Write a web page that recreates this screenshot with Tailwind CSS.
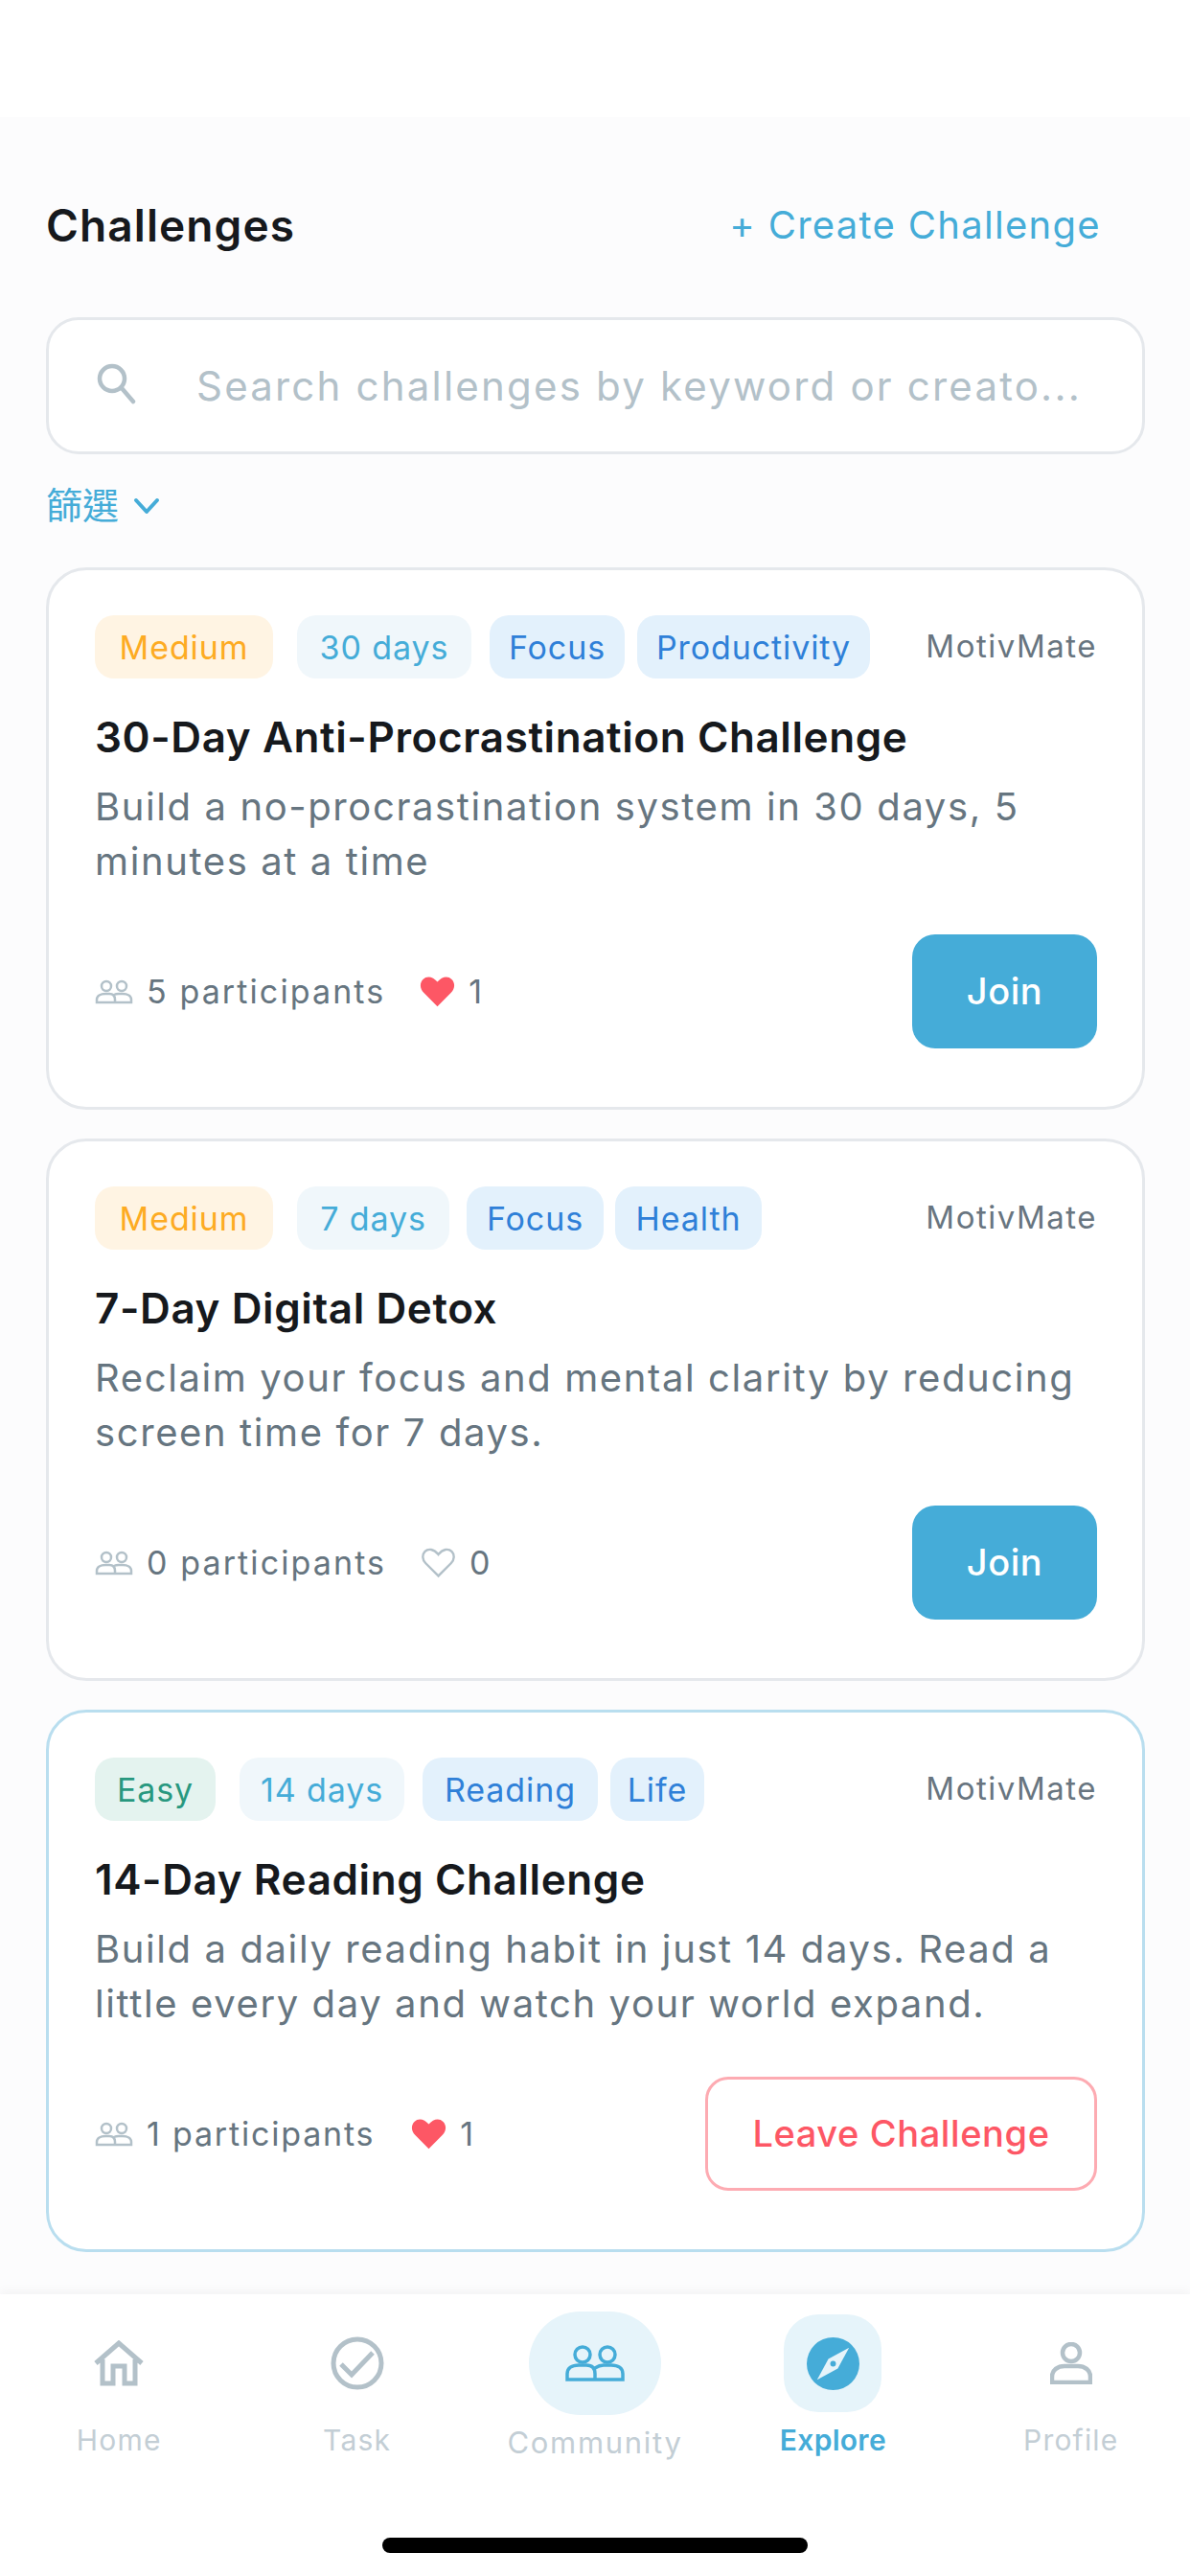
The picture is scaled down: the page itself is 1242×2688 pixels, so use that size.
<!DOCTYPE html>
<html lang="en">
<head>
    <meta charset="UTF-8">
    <meta name="viewport" content="width=device-width, initial-scale=1.0">
    <title>Challenges</title>
    <script src="https://cdn.jsdelivr.net/npm/@tailwindcss/browser@4"></script>
</head>
<body class="bg-white font-['Inter','Noto_Sans_CJK_TC',sans-serif]">
<div class="w-[1242px] h-[2688px] flex flex-col overflow-hidden">
    <!-- status bar area -->
    <div class="h-[122px] bg-white"></div>

    <main class="h-[2272px] bg-[#fcfcfd] pl-[48px] pr-[47px]">
        <div class="flex items-center justify-between h-[62px] mt-[82px] pr-[46px]">
            <h1 class="text-[46px] font-semibold text-[#16191d] tracking-[1.1px]">Challenges</h1>
            <a class="text-[40px] text-[#45acd8] tracking-[1.3px]">+ Create Challenge</a>
        </div>

        <div class="h-[143px] mt-[65px] bg-white border-[3px] border-[#e5e8ec] rounded-[34px] flex items-center pl-[48px] pr-[20px]">
            <svg class="w-[44px] h-[44px] mr-[62px] shrink-0 -mt-[6px]" viewBox="0 0 44 44" fill="none" stroke="#b3c1c9" stroke-width="4.5" stroke-linecap="round"><circle cx="18" cy="17" r="13"/><path d="M28 27 40 41"/></svg>
            <span class="text-[42px] text-[#b3c1c9] tracking-[2.2px] whitespace-nowrap">Search challenges by keyword or creato...</span>
        </div>

        <div class="flex items-center h-[40px] mt-[33px] text-[#45acd8]">
            <span class="text-[38px] leading-[40px]">篩選</span>
            <svg class="w-[28px] h-[20px] ml-[15px] mt-[2px]" viewBox="0 0 28 20" fill="none" stroke="#45acd8" stroke-width="4" stroke-linecap="round" stroke-linejoin="round"><path d="M3 4 14 16 25 4"/></svg>
        </div>

        <div class="flex flex-col gap-[30px] mt-[45px]">
            <!-- card 1 -->
            <article class="h-[566px] bg-white border-[3px] border-[#e5e8ec] rounded-[42px] pt-[47px] pl-[48px] pr-[47px]">
                <div class="flex items-center h-[66px]">
                    <span class="w-[186px] h-[66px] flex items-center justify-center rounded-[20px] bg-[#fff4e3] text-[#fdab23] text-[34px] tracking-[0.9px]">Medium</span>
                    <span class="w-[182px] h-[66px] ml-[25px] flex items-center justify-center rounded-[20px] bg-[#f0f7fb] text-[#45acd8] text-[34px] tracking-[0.9px]">30 days</span>
                    <span class="w-[141px] h-[66px] ml-[19px] flex items-center justify-center rounded-[20px] bg-[#e3f1fc] text-[#2f80d8] text-[34px] tracking-[0.9px]">Focus</span>
                    <span class="w-[243px] h-[66px] ml-[13px] flex items-center justify-center rounded-[20px] bg-[#e3f1fc] text-[#2f80d8] text-[34px] tracking-[0.9px]">Productivity</span>
                    <span class="ml-auto text-[33px] text-[#687580] tracking-[1.5px]">MotivMate</span>
                </div>
                <h2 class="mt-[31px] h-[60px] leading-[60px] text-[44px] font-semibold text-[#16191d] tracking-[0.6px]">30-Day Anti-Procrastination Challenge</h2>
                <p class="mt-[14px] text-[40px] leading-[57px] text-[#667580] tracking-[1.6px]">Build a no-procrastination system in 30 days, 5<br>minutes at a time</p>
                <div class="flex items-center justify-between mt-[48px] h-[119px]">
                    <div class="flex items-center text-[34px] text-[#667580] tracking-[2.1px]">
                        <svg class="w-[40px] h-[26px] mr-[14px]" viewBox="0 0 40 26" fill="none" stroke="#b3c1c9" stroke-width="2.5"><circle cx="12" cy="7" r="5"/><circle cx="28" cy="7" r="5"/><path d="M2 24v-3c0-4 4-6 9-6h4c4 0 6 2 6 6v3zM21 24h17v-3c0-4-4-6-9-6h-4c-2 0-3 0-5 1"/></svg>
                        <span>5 participants</span>
                        <svg class="w-[37px] h-[33px] ml-[36px] mr-[14px]" viewBox="0 0 24 22" fill="#fd5765"><path d="M12 21.500 2.600 12C-.4 9-.4 5 2 2.600 4.600 0 8.800.4 12 4.400 15.200.4 19.400 0 22 2.600 24.400 5 24.400 9 21.400 12z"/></svg>
                        <span>1</span>
                    </div>
                    <button class="w-[193px] h-[119px] rounded-[24px] bg-[#45acd8] text-white text-[38px] font-medium tracking-[0.6px]">Join</button>
                </div>
            </article>

            <!-- card 2 -->
            <article class="h-[566px] bg-white border-[3px] border-[#e5e8ec] rounded-[42px] pt-[47px] pl-[48px] pr-[47px]">
                <div class="flex items-center h-[66px]">
                    <span class="w-[186px] h-[66px] flex items-center justify-center rounded-[20px] bg-[#fff4e3] text-[#fdab23] text-[34px] tracking-[0.9px]">Medium</span>
                    <span class="w-[159px] h-[66px] ml-[25px] flex items-center justify-center rounded-[20px] bg-[#f0f7fb] text-[#45acd8] text-[34px] tracking-[0.9px]">7 days</span>
                    <span class="w-[143px] h-[66px] ml-[18px] flex items-center justify-center rounded-[20px] bg-[#e3f1fc] text-[#2f80d8] text-[34px] tracking-[0.9px]">Focus</span>
                    <span class="w-[153px] h-[66px] ml-[12px] flex items-center justify-center rounded-[20px] bg-[#e3f1fc] text-[#2f80d8] text-[34px] tracking-[0.9px]">Health</span>
                    <span class="ml-auto text-[33px] text-[#687580] tracking-[1.5px]">MotivMate</span>
                </div>
                <h2 class="mt-[31px] h-[60px] leading-[60px] text-[44px] font-semibold text-[#16191d] tracking-[0.6px]">7-Day Digital Detox</h2>
                <p class="mt-[14px] text-[40px] leading-[57px] text-[#667580] tracking-[1.6px]">Reclaim your focus and mental clarity by reducing<br>screen time for 7 days.</p>
                <div class="flex items-center justify-between mt-[48px] h-[119px]">
                    <div class="flex items-center text-[34px] text-[#667580] tracking-[2.1px]">
                        <svg class="w-[40px] h-[26px] mr-[14px]" viewBox="0 0 40 26" fill="none" stroke="#b3c1c9" stroke-width="2.5"><circle cx="12" cy="7" r="5"/><circle cx="28" cy="7" r="5"/><path d="M2 24v-3c0-4 4-6 9-6h4c4 0 6 2 6 6v3zM21 24h17v-3c0-4-4-6-9-6h-4c-2 0-3 0-5 1"/></svg>
                        <span>0 participants</span>
                        <svg class="w-[37px] h-[33px] ml-[36px] mr-[14px]" viewBox="0 0 24 22" fill="none" stroke="#b3c1c9" stroke-width="1.6"><path d="M12 20.300 3.200 11.500C.6 8.900.6 5.400 2.700 3.300 5 1 8.800 1.400 12 5.400 15.200 1.400 19 1 21.300 3.300 23.400 5.400 23.400 8.900 20.800 11.500z"/></svg>
                        <span>0</span>
                    </div>
                    <button class="w-[193px] h-[119px] rounded-[24px] bg-[#45acd8] text-white text-[38px] font-medium tracking-[0.6px]">Join</button>
                </div>
            </article>

            <!-- card 3 -->
            <article class="h-[566px] bg-white border-[3px] border-[#b9deef] rounded-[42px] pt-[47px] pl-[48px] pr-[47px]">
                <div class="flex items-center h-[66px]">
                    <span class="w-[126px] h-[66px] flex items-center justify-center rounded-[20px] bg-[#e4f3ef] text-[#28987f] text-[34px] tracking-[0.9px]">Easy</span>
                    <span class="w-[172px] h-[66px] ml-[25px] flex items-center justify-center rounded-[20px] bg-[#f0f7fb] text-[#45acd8] text-[34px] tracking-[0.9px]">14 days</span>
                    <span class="w-[183px] h-[66px] ml-[19px] flex items-center justify-center rounded-[20px] bg-[#e3f1fc] text-[#2f80d8] text-[34px] tracking-[0.9px]">Reading</span>
                    <span class="w-[98px] h-[66px] ml-[13px] flex items-center justify-center rounded-[20px] bg-[#e3f1fc] text-[#2f80d8] text-[34px] tracking-[0.9px]">Life</span>
                    <span class="ml-auto text-[33px] text-[#687580] tracking-[1.5px]">MotivMate</span>
                </div>
                <h2 class="mt-[31px] h-[60px] leading-[60px] text-[44px] font-semibold text-[#16191d] tracking-[0.6px]">14-Day Reading Challenge</h2>
                <p class="mt-[14px] text-[40px] leading-[57px] text-[#667580] tracking-[1.6px]">Build a daily reading habit in just 14 days. Read a<br>little every day and watch your world expand.</p>
                <div class="flex items-center justify-between mt-[48px] h-[119px]">
                    <div class="flex items-center text-[34px] text-[#667580] tracking-[1.8px]">
                        <svg class="w-[40px] h-[26px] mr-[14px]" viewBox="0 0 40 26" fill="none" stroke="#b3c1c9" stroke-width="2.5"><circle cx="12" cy="7" r="5"/><circle cx="28" cy="7" r="5"/><path d="M2 24v-3c0-4 4-6 9-6h4c4 0 6 2 6 6v3zM21 24h17v-3c0-4-4-6-9-6h-4c-2 0-3 0-5 1"/></svg>
                        <span>1 participants</span>
                        <svg class="w-[37px] h-[33px] ml-[38px] mr-[14px]" viewBox="0 0 24 22" fill="#fd5765"><path d="M12 21.500 2.600 12C-.4 9-.4 5 2 2.600 4.600 0 8.800.4 12 4.400 15.200.4 19.400 0 22 2.600 24.400 5 24.400 9 21.400 12z"/></svg>
                        <span>1</span>
                    </div>
                    <button class="w-[409px] h-[119px] rounded-[24px] bg-white border-[3px] border-[#fdabb2] text-[#fd5765] text-[38px] font-medium tracking-[0.6px]">Leave Challenge</button>
                </div>
            </article>
        </div>
    </main>

    <!-- bottom nav -->
    <nav class="relative flex-1 bg-white shadow-[0_-4px_10px_rgba(0,0,0,0.035)]">
        <div class="grid grid-cols-5 h-[190px] pt-[18px]">
            <div class="flex flex-col items-center">
                <div class="h-[108px] flex items-center justify-center">
                    <svg class="w-[54px] h-[48px]" viewBox="0 0 54 48" fill="none" stroke="#b3c1c9" stroke-width="5"><path d="M3 24 27 3l24 21M10 20v25h11V27h12v18h11V20"/></svg>
                </div>
                <span class="mt-[4px] text-[30px] text-[#c3ced5] tracking-[1.2px]">Home</span>
            </div>
            <div class="flex flex-col items-center">
                <div class="h-[108px] flex items-center justify-center">
                    <svg class="w-[56px] h-[56px]" viewBox="0 0 56 56" fill="none" stroke="#b3c1c9" stroke-width="5"><circle cx="28" cy="28" r="25"/><path d="M11 29l11 11 22-23"/></svg>
                </div>
                <span class="mt-[4px] text-[30px] text-[#c3ced5] tracking-[1.2px]">Task</span>
            </div>
            <div class="flex flex-col items-center">
                <div class="w-[138px] h-[108px] rounded-[54px] bg-[#e6f4fa] flex items-center justify-center">
                    <svg class="w-[62px] h-[38px]" viewBox="0 0 62 38" fill="none" stroke="#45acd8" stroke-width="3.500"><circle cx="18" cy="10" r="8"/><circle cx="44" cy="10" r="8"/><path d="M2 36v-6c0-6 5-9 12-9h8c6 0 9 3 9 9v6zM31 36h29v-6c0-6-5-9-12-9h-8c-3 0-6 1-9 3"/></svg>
                </div>
                <span class="mt-[6px] text-[31px] text-[#c3ced5] tracking-[1.7px]">Community</span>
            </div>
            <div class="flex flex-col items-center">
                <div class="w-[102px] h-[102px] mt-[3px] mb-[3px] rounded-[36px] bg-[#e6f4fa] flex items-center justify-center">
                    <svg class="w-[55px] h-[55px]" viewBox="0 0 56 56"><circle cx="28" cy="28" r="28" fill="#45acd8"/><path d="M45 11 33 33 11 45 23 23z" fill="#e6f4fa"/><circle cx="28" cy="28" r="3" fill="#45acd8"/></svg>
                </div>
                <span class="mt-[4px] text-[30px] font-semibold text-[#45acd8] tracking-[0.3px]">Explore</span>
            </div>
            <div class="flex flex-col items-center">
                <div class="h-[108px] flex items-center justify-center">
                    <svg class="w-[44px] h-[44px]" viewBox="0 0 44 44" fill="none" stroke="#b3c1c9" stroke-width="4.500"><circle cx="22" cy="11" r="9"/><path d="M2 42v-6c0-7 6-11 13-11h14c7 0 13 4 13 11v6z"/></svg>
                </div>
                <span class="mt-[4px] text-[30px] text-[#c3ced5] tracking-[1.2px]">Profile</span>
            </div>
        </div>
        <div class="w-[444px] h-[16px] mx-auto mt-[64px] bg-black rounded-full"></div>
    </nav>
</div>
</body>
</html>
